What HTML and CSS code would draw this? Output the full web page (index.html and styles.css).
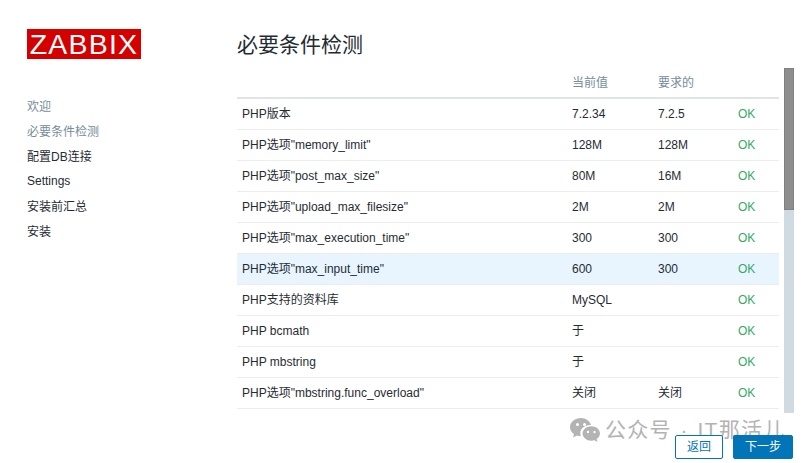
FILE: index.html
```
<!DOCTYPE html>
<html lang="zh">
<head>
<meta charset="utf-8">
<title>ZABBIX</title>
<link rel="stylesheet" href="styles.css">
</head>
<body>
<div class="page">
  <aside class="side">
    <div class="logo">ZABBIX</div>
    <ul class="steps">
      <li class="done">欢迎</li>
      <li class="done">必要条件检测</li>
      <li>配置DB连接</li>
      <li class="latin">Settings</li>
      <li>安装前汇总</li>
      <li>安装</li>
    </ul>
  </aside>
  <main class="main">
    <h1 class="title">必要条件检测</h1>
    <table class="checks">
      <thead>
        <tr><th class="c-name"></th><th class="c-cur">当前值</th><th class="c-req">要求的</th><th class="c-ok"></th></tr>
      </thead>
      <tbody>
        <tr class="first"><td>PHP版本</td><td>7.2.34</td><td>7.2.5</td><td class="ok">OK</td></tr>
        <tr><td>PHP选项"memory_limit"</td><td>128M</td><td>128M</td><td class="ok">OK</td></tr>
        <tr><td>PHP选项"post_max_size"</td><td>80M</td><td>16M</td><td class="ok">OK</td></tr>
        <tr><td>PHP选项"upload_max_filesize"</td><td>2M</td><td>2M</td><td class="ok">OK</td></tr>
        <tr><td>PHP选项"max_execution_time"</td><td>300</td><td>300</td><td class="ok">OK</td></tr>
        <tr class="hover"><td>PHP选项"max_input_time"</td><td>600</td><td>300</td><td class="ok">OK</td></tr>
        <tr><td>PHP支持的资料库</td><td>MySQL</td><td></td><td class="ok">OK</td></tr>
        <tr><td>PHP bcmath</td><td>于</td><td></td><td class="ok">OK</td></tr>
        <tr><td>PHP mbstring</td><td>于</td><td></td><td class="ok">OK</td></tr>
        <tr><td>PHP选项"mbstring.func_overload"</td><td>关闭</td><td>关闭</td><td class="ok">OK</td></tr>
      </tbody>
    </table>
  </main>
  <div class="scrollbar"><div class="thumb"></div></div>
</div>
<div class="watermark">
  <svg class="wx" width="30" height="26" viewBox="0 0 30 26" aria-hidden="true">
    <path class="wx-a" d="M11 1C5 1 0 5 0 10c0 3 1.500 5.400 4 7l-1 3.500 4-2c1.200.4 2.500.5 3.800.5-.3-1-.5-1.800-.5-2.800 0-4.700 4.500-8.300 9.800-8.300h.9C19.900 3.900 15.800 1 11 1z"/>
    <path class="wx-a" d="M30 16.500c0-4-4-7.200-8.700-7.200-4.800 0-8.700 3.200-8.700 7.200s3.900 7.200 8.700 7.200c1 0 2-.2 3-.5l3.200 1.800-.9-3c2-1.300 3.400-3.300 3.400-5.500z"/>
    <circle class="wx-b" cx="7.500" cy="7.500" r="1.500"/><circle class="wx-b" cx="14.500" cy="7.500" r="1.500"/>
    <circle class="wx-b" cx="18" cy="15" r="1.200"/><circle class="wx-b" cx="24.500" cy="15" r="1.200"/>
  </svg>
  <span class="wm-text">公众号 · IT那活儿</span>
</div>
<div class="buttons">
  <button class="btn back">返回</button>
  <button class="btn next">下一步</button>
</div>
</body>
</html>
```
FILE: styles.css
```
* { box-sizing: border-box; }
html, body { margin: 0; height: 100%; overflow: hidden; background: #fff; }
body { font: 12px/1.2 "Liberation Sans", "Noto Sans CJK SC", sans-serif; color: #1f2c33; position: relative; }
.page { display: flex; height: 463px; }
.side { width: 237px; flex: none; padding: 29px 0 0 27px; }
.logo { width: 114px; height: 30px; background: #d40000; color: #fff; font-size: 28.5px; line-height: 30px; text-align: center; letter-spacing: 1.2px; }
.steps { list-style: none; margin: 36px 0 0; padding: 0; }
.steps li { height: 25px; line-height: 25px; }
.steps .latin { line-height: 23px; }
.steps .done { color: #768d99; }
.main { width: 542px; flex: none; }
.title { margin: 0; padding-top: 31px; font-size: 21px; font-weight: 400; line-height: 27px; height: 68px; }
.checks { width: 542px; border-collapse: collapse; table-layout: fixed; }
.checks th { height: 30px; padding: 2px 5px 0; font-weight: 400; text-align: left; color: #768d99; border-bottom: 2px solid #dfe4e7; }
.c-name { width: 330px; } .c-cur { width: 86px; } .c-req { width: 80px; } .c-ok { width: 46px; }
.checks td { height: 31px; padding: 2px 5px 0; border-bottom: 1px solid #ebeef0; white-space: nowrap; }
.checks .first td { padding-top: 0; }
.checks .ok { color: #34a964; }
.hover td { background: #e8f5ff; }
.scrollbar { width: 10px; height: 345px; margin: 68px 0 0 5px; background: #cfdae2; flex: none; }
.thumb { height: 142px; background: #8e8e8e; border: 1px solid #808080; }
.watermark { position: absolute; left: 570px; top: 417px; display: flex; align-items: center; gap: 5px; color: #b3b3b3; font-size: 21px; line-height: 26px; white-space: nowrap; }
.wm-text { letter-spacing: 1.3px; word-spacing: 1.5px; }
.wx { flex: none; }
.wx-a { fill: #b3b3b3; }
.wx-b { fill: #fff; }
.buttons { position: absolute; left: 675px; top: 435px; display: flex; gap: 10px; }
.btn { height: 24px; font: inherit; border-radius: 2px; padding: 0; }
.back { width: 48px; background: #fff; color: #0275b8; border: 1px solid #0275b8; }
.next { width: 60px; background: #0275b8; color: #fff; border: 1px solid #0275b8; }
```
